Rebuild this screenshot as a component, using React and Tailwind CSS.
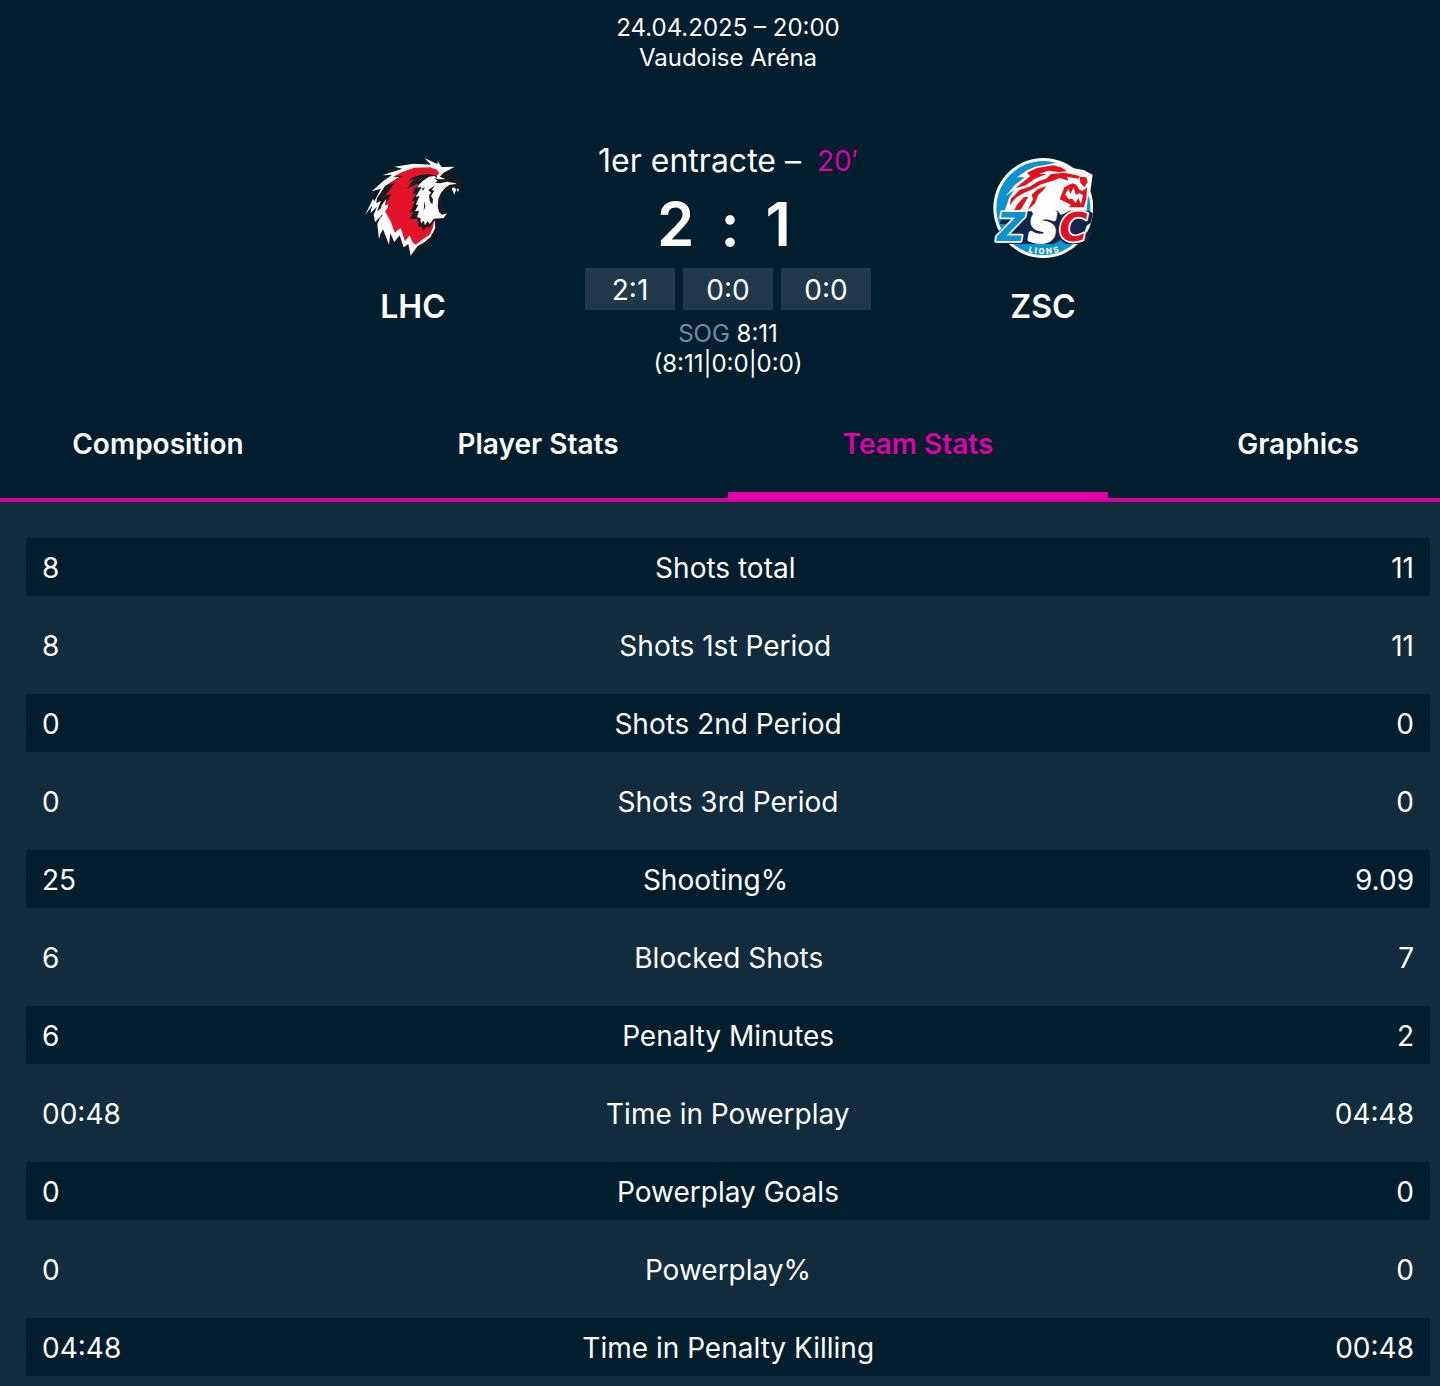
const rows = [
  ["8", "Shots total", "11"],
  ["8", "Shots 1st Period", "11"],
  ["0", "Shots 2nd Period", "0"],
  ["0", "Shots 3rd Period", "0"],
  ["25", "Shooting%", "9.09"],
  ["6", "Blocked Shots", "7"],
  ["6", "Penalty Minutes", "2"],
  ["00:48", "Time in Powerplay", "04:48"],
  ["0", "Powerplay Goals", "0"],
  ["0", "Powerplay%", "0"],
  ["04:48", "Time in Penalty Killing", "00:48"],
];

const tabs = ["Composition", "Player Stats", "Team Stats", "Graphics"];

function LausanneLogo() {
  return (
    <svg viewBox="24 30 300 300" className="size-[100px]" role="img" aria-label="Lausanne HC">
      <path
        fill="#1d1a1d"
        d="M96 66 L150 60 L224 42 L300 66 L280 86 L319 95 L319 122 L304 120 L290 122 L276 132 L264 150 L260 182 L270 188 L280 198 L270 216 L246 216 L244 246 L232 274 L208 290 L174 328 L166 298 L150 306 L122 278 L108 296 L88 264 L74 276 L66 232 L58 216 Z"
      />
      <path
        fill="#fff"
        d="M30 202 L54 152 L58 160 L78 122 L50 130 L86 98 L112 80 L82 82 L142 62 L118 56 L176 47 L228 50 L208 30 L240 45 L249 48 L247 38 L260 57 L299 56 L266 74 L254 86 L270 92 L240 120 L238 210 L241 240 L226 268 L206 284 L188 294 L167 323 L160 288 L146 298 L134 262 L118 282 L106 256 L102 290 L84 244 L76 258 L72 274 L67 228 L78 204 L60 222 L56 200 L66 176 L46 196 L52 172 Z"
      />
      <path
        fill="#1d1a1d"
        d="M66 150 L90 114 L134 86 L112 88 L160 70 L150 90 L124 136 L112 166 L104 190 L96 226 L90 218 L94 190 L76 210 L84 176 L66 190 L78 158 L64 166 Z"
      />
      <path
        fill="#fff"
        d="M80 172 L94 152 L90 172 L102 166 L94 194 L104 190 L104 224 L96 240 L86 224 L74 228 L84 200 L74 204 Z"
      />
      <path
        fill="#e31429"
        d="M118 84 L142 72 L178 59 L225 58 L246 65 L253 76 L242 86 L226 90 L204 112 L204 140 L196 170 L200 214 L210 232 L238 214 L234 238 L224 260 L204 274 L182 290 L172 282 L164 262 L150 280 L137 240 L119 254 L108 222 L90 190 L106 170 L90 170 L110 138 L92 142 L118 106 L98 110 L142 84 Z"
      />
      <path
        fill="#1d1a1d"
        d="M246 84 L222 78 L196 80 L174 88 L160 98 L180 94 L166 106 L156 124 L180 110 L196 106 L180 120 L172 138 L184 136 L170 160 L180 158 L170 182 L164 194 L176 190 L164 214 L186 212 L192 238 L198 234 L206 250 L214 236 L224 238 L240 216 L246 150 Z"
      />
      <path
        fill="#fff"
        d="M238 84 L222 86 L202 100 L186 118 L200 118 L182 146 L194 144 L182 170 L190 170 L180 190 L192 188 L186 208 L196 210 L198 226 L206 218 L210 232 L218 220 L224 228 L236 212 L266 210 L276 196 L262 200 L252 192 L248 176 L250 152 L258 134 L270 120 L284 110 L304 108 L310 102 L290 98 L258 98 Z"
      />
      <path
        fill="#1d1a1d"
        d="M236 90 L254 94 L318 94 L319 120 L306 114 L302 106 L276 101 L256 106 L240 104 L248 98 Z M240 112 L230 126 L238 128 L228 144 L234 154 L232 170 L224 158 L222 142 L228 134 L220 126 Z M200 122 L210 118 L204 128 Z M208 160 L211 176 L206 188 Z"
      />
      <path fill="#fff" d="M290 122 L296 118 L304 124 L298 140 Z M305 122 L312 122 L309 134 Z" />
    </svg>
  );
}

function ZurichLogo() {
  return (
    <svg viewBox="24 24 300 300" className="size-[100px]" role="img" aria-label="ZSC Lions">
      <defs>
        <path id="lions-arc" d="M108 298 Q174 326 244 298" />
      </defs>
      <circle cx="175" cy="174" r="150" fill="#fff" />
      <circle cx="175" cy="174" r="141" fill="#0c93cf" />
      <path
        fill="#fff"
        d="M60 180 L72 144 L88 120 L62 138 L90 104 L120 82 L96 82 L124 62 L150 50 L196 42 L220 36 L232 44 L262 54 L296 60 L323 74 L316 124 L308 146 L304 194 L66 194 Z"
      />
      <g fill="#e6101c">
        <path d="M126 68 L156 54 L204 46 L228 52 L246 64 L222 66 L190 62 L162 72 L184 72 L150 86 L122 106 L92 114 L136 78 Z" />
        <path d="M78 146 L104 120 L134 110 L160 94 L184 86 L198 72 L240 68 L284 78 L280 86 L246 80 L250 92 L224 84 L204 92 L190 96 L166 104 L142 118 L118 128 L94 142 L74 166 Z" />
        <path d="M140 134 L158 118 L184 108 L172 124 L160 134 L150 160 L128 180 L144 148 Z M96 164 L116 142 L130 140 L108 178 L84 188 Z" />
        <path d="M284 80 L304 82 L308 96 L298 112 L286 98 Z" />
        <path d="M224 148 L238 112 L262 100 L274 104 L284 120 L294 122 L306 112 L304 148 L296 172 L252 172 L258 164 Z" />
      </g>
      <path fill="#fff" d="M240 134 L250 116 L256 132 L266 112 L272 134 L284 130 L294 136 L288 162 L280 144 L272 160 L262 146 L252 148 Z" />
      <path fill="#12264c" d="M54 184 H140 L146 196 L168 182 H218 L228 196 L254 182 H312 L324 190 L318 218 L304 228 L298 248 L322 246 L310 270 L286 282 H242 L226 270 L206 282 H24 L28 256 L64 222 H44 Z" />
      <g
        fontFamily="DejaVu Sans, sans-serif"
        fontWeight="700"
        fontStyle="oblique"
        fontSize="116"
        strokeLinejoin="round"
        stroke="#fff"
        style={{ paintOrder: "stroke" }}
      >
        <text x="36" y="274" fill="#0c93cf" strokeWidth="10">Z</text>
        <text x="133" y="274" fill="#fff" strokeWidth="14">S</text>
        <text x="223" y="274" fill="#e6101c" strokeWidth="10">C</text>
      </g>
      <text fill="#fff" fontFamily="Inter, sans-serif" fontWeight="800" fontSize="24">
        <textPath href="#lions-arc" startOffset="50%" textAnchor="middle">L I O N S</textPath>
      </text>
    </svg>
  );
}

function Team({ name, children }) {
  return (
    <div className="flex flex-col items-center pt-4">
      {children}
      <h2 className="mt-[29px] text-[32px] leading-10 font-semibold">{name}</h2>
    </div>
  );
}

export default function App() {
  return (
    <main className="min-h-screen overflow-hidden bg-[#102c3d] pb-2.5 font-[Inter,sans-serif] text-white">
      <header className="bg-[#001e2e] pt-[13px] pl-4">
        <div className="text-center text-2xl leading-[30px]">
          <p>24.04.2025 – 20:00</p>
          <p>Vaudoise Aréna</p>
        </div>
        <section className="mx-auto mt-[69px] grid max-w-[945px] grid-cols-3" aria-label="Score">
          <Team name="LHC">
            <LausanneLogo />
          </Team>
          <div className="flex flex-col items-center">
            <p className="flex items-center gap-4 text-[32px] leading-[38px] whitespace-nowrap">
              1er entracte – <span className="text-[28px] text-[#df00a6]">20′</span>
            </p>
            <p className="flex h-[88px] items-center justify-center gap-[26px] pr-2 text-[60px] font-semibold">
              <span>2</span>
              <span>:</span>
              <span>1</span>
            </p>
            <ul className="flex gap-2 text-center text-[28px] leading-[44px]">
              {["2:1", "0:0", "0:0"].map((s, i) => (
                <li key={i} className="h-[42px] w-[90px] bg-[#1f394a]">{s}</li>
              ))}
            </ul>
            <div className="mt-[9px] text-center text-2xl leading-[30px]">
              <p><span className="text-[#6f8ca3]">SOG</span> 8:11</p>
              <p>(8:11|0:0|0:0)</p>
            </div>
          </div>
          <Team name="ZSC">
            <ZurichLogo />
          </Team>
        </section>
        <nav className="-mr-12 -ml-12 mt-[7px] flex border-b-4 border-[#d2009c]">
          {tabs.map((t) => (
            <button
              key={t}
              type="button"
              aria-current={t === "Team Stats" ? "page" : undefined}
              className="-mb-0.5 flex h-[114px] flex-1 items-center justify-center border-b-8 border-transparent pt-2.5 text-[28px] font-semibold aria-[current=page]:border-[#df00a6] aria-[current=page]:text-[#df00a6]"
            >
              {t}
            </button>
          ))}
        </nav>
      </header>
      <table className="mt-9 mr-2.5 ml-[26px] block">
        <tbody className="flex flex-col gap-5">
          {rows.map(([home, label, away]) => (
            <tr key={label} className="flex h-[58px] items-center justify-between px-4 pt-0.5 text-[28px] odd:bg-[#001e2e]">
              <td>{home}</td>
              <th scope="row" className="font-normal">{label}</th>
              <td>{away}</td>
            </tr>
          ))}
        </tbody>
      </table>
    </main>
  );
}
